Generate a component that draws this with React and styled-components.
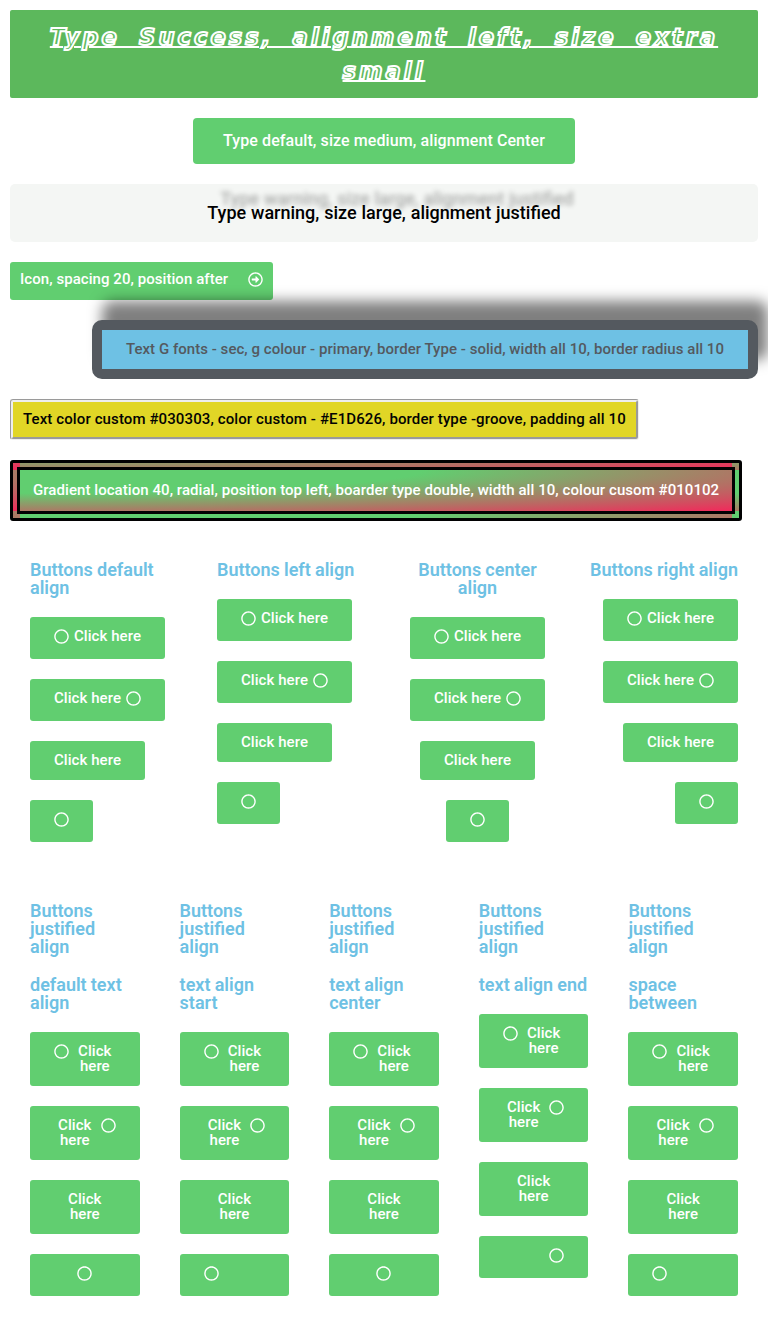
import React from 'react';
import styled, { createGlobalStyle } from 'styled-components';
import { FaRegCircle, FaRegArrowAltCircleRight } from 'react-icons/fa';

const GlobalStyle = createGlobalStyle`
  *, *::before, *::after { box-sizing: border-box; }
  body { margin: 0; background: #fff; overflow-x: hidden; font-family: Roboto, sans-serif; }
`;

const Page = styled.main`
  display: flex;
  flex-direction: column;
  gap: 20px;
  padding: 10px;
`;

const aligns = { left: 'flex-start', center: 'center', right: 'flex-end', justify: 'stretch' };

const Button = styled.a`
  display: block;
  align-self: ${(p) => aligns[p.$align || 'left']};
  padding: 12px 24px;
  border-radius: 3px;
  background-color: #61ce70;
  color: #fff;
  font-size: 15px;
  font-weight: 500;
  line-height: 1;
  letter-spacing: 0.06px;
  text-align: center;
  cursor: pointer;
`;

const SuccessButton = styled(Button)`
  padding: 10px 20px;
  border-radius: 2px;
  background-color: #5cb85c;
  color: #5cb85c;
  font-family: 'DejaVu Sans', sans-serif;
  font-size: 22.5px;
  font-style: italic;
  font-weight: 700;
  line-height: 34px;
  letter-spacing: 3.1px;
  word-spacing: 8.3px;
  text-decoration: underline 2px #fff;
  -webkit-text-stroke: 2px #fff;
`;

const MediumButton = styled(Button)`
  padding: 15px 30px;
  border-radius: 4px;
  font-size: 16px;
  letter-spacing: 0.09px;
`;

const WarningButton = styled(Button)`
  padding: 20px 40px;
  border-radius: 5px;
  background-color: #f4f6f4;
  color: #000;
  font-size: 18px;
  letter-spacing: 0;
  word-spacing: 0.4px;
  text-shadow: 13px -14px 5px rgba(0, 0, 0, 0.3);
`;

const IconButton = styled(Button)`
  padding: 10px;
`;

const ShadowButton = styled(Button)`
  border: 10px solid #54595f;
  border-radius: 10px;
  background-color: #6ec1e4;
  color: #54595f;
  letter-spacing: 0.037px;
  box-shadow: 10px -19px 14px 0 rgba(0, 0, 0, 0.5);
`;

const GrooveButton = styled(Button)`
  padding: 10px;
  border: 3px groove #eee;
  background-color: #e1d626;
  color: #030303;
  letter-spacing: 0.11px;
`;

const GradientButton = styled(Button)`
  padding: 13px;
  border: 10px double #010102;
  background-color: transparent;
  background-image: radial-gradient(at top left, #61ce70 40%, #f2295b 100%);
`;

const Content = styled.span`
  display: flex;
  flex-direction: ${(p) => (p.$after ? 'row-reverse' : 'row')};
  justify-content: ${(p) => p.$justify || 'center'};
  gap: ${(p) => p.$gap || 5}px;
`;

const Icon = styled.span`
  display: block;
  flex: none;
  height: 18px;
  svg { display: block; width: 15px; height: 15px; }
`;

const Label = styled.span`
  display: block;
  flex-grow: ${(p) => (p.$grow ? 1 : 0)};
`;

const Columns = styled.section`
  display: grid;
  grid-template-columns: repeat(${(p) => p.$count}, minmax(0, 1fr));
`;

const Column = styled.div`
  display: flex;
  flex-direction: column;
  gap: 20px;
  padding: 20px;
`;

const Heading = styled.h2`
  margin: 0;
  color: #6ec1e4;
  font-size: 18px;
  font-weight: 600;
  line-height: 1;
  word-spacing: -0.3px;
  text-align: ${(p) => p.$align || 'left'};
  white-space: ${(p) => (p.$align === 'right' ? 'nowrap' : 'normal')};
  direction: ${(p) => (p.$align === 'right' ? 'rtl' : 'ltr')};
`;

function ButtonSet({ align, justify }) {
  const grow = align === 'justify';
  return (
    <>
      <Button $align={align}>
        <Content $justify={justify}>
          <Icon><FaRegCircle /></Icon>
          <Label $grow={grow}>Click here</Label>
        </Content>
      </Button>
      <Button $align={align}>
        <Content $after $justify={justify}>
          <Icon><FaRegCircle /></Icon>
          <Label $grow={grow}>Click here</Label>
        </Content>
      </Button>
      <Button $align={align}>
        <Content $justify={justify}>
          <Label $grow={grow}>Click here</Label>
        </Content>
      </Button>
      <Button $align={align}>
        <Content $justify={justify}>
          <Icon><FaRegCircle /></Icon>
        </Content>
      </Button>
    </>
  );
}

const alignedColumns = [
  { title: 'Buttons default align', align: 'left' },
  { title: 'Buttons left align', align: 'left' },
  { title: 'Buttons center align', align: 'center' },
  { title: 'Buttons right align', align: 'right' },
];

const justifiedColumns = [
  { title: 'default text align', justify: 'center' },
  { title: 'text align start', justify: 'flex-start' },
  { title: 'text align center', justify: 'center' },
  { title: 'text align end', justify: 'flex-end' },
  { title: 'space between', justify: 'space-between' },
];

export default function App() {
  return (
    <>
      <GlobalStyle />
      <Page>
        <SuccessButton $align="justify">Type Success, alignment left, size extra small</SuccessButton>
        <MediumButton $align="center">Type default, size medium, alignment Center</MediumButton>
        <WarningButton $align="justify">Type warning, size large, alignment justified</WarningButton>
        <IconButton>
          <Content $after $gap={20}>
            <Icon><FaRegArrowAltCircleRight /></Icon>
            <Label>Icon, spacing 20, position after</Label>
          </Content>
        </IconButton>
        <ShadowButton $align="right">
          Text G fonts - sec, g colour - primary, border Type - solid, width all 10, border radius all 10
        </ShadowButton>
        <GrooveButton>
          Text color custom #030303, color custom - #E1D626, border type -groove, padding all 10
        </GrooveButton>
        <GradientButton>
          Gradient location 40, radial, position top left, boarder type double, width all 10, colour cusom #010102
        </GradientButton>
        <Columns $count={4}>
          {alignedColumns.map((c) => (
            <Column key={c.title}>
              <Heading $align={c.align}>{c.title}</Heading>
              <ButtonSet align={c.align} />
            </Column>
          ))}
        </Columns>
        <Columns $count={5}>
          {justifiedColumns.map((c) => (
            <Column key={c.title}>
              <Heading>Buttons justified<br />align</Heading>
              <Heading>{c.title}</Heading>
              <ButtonSet align="justify" justify={c.justify} />
            </Column>
          ))}
        </Columns>
      </Page>
    </>
  );
}
